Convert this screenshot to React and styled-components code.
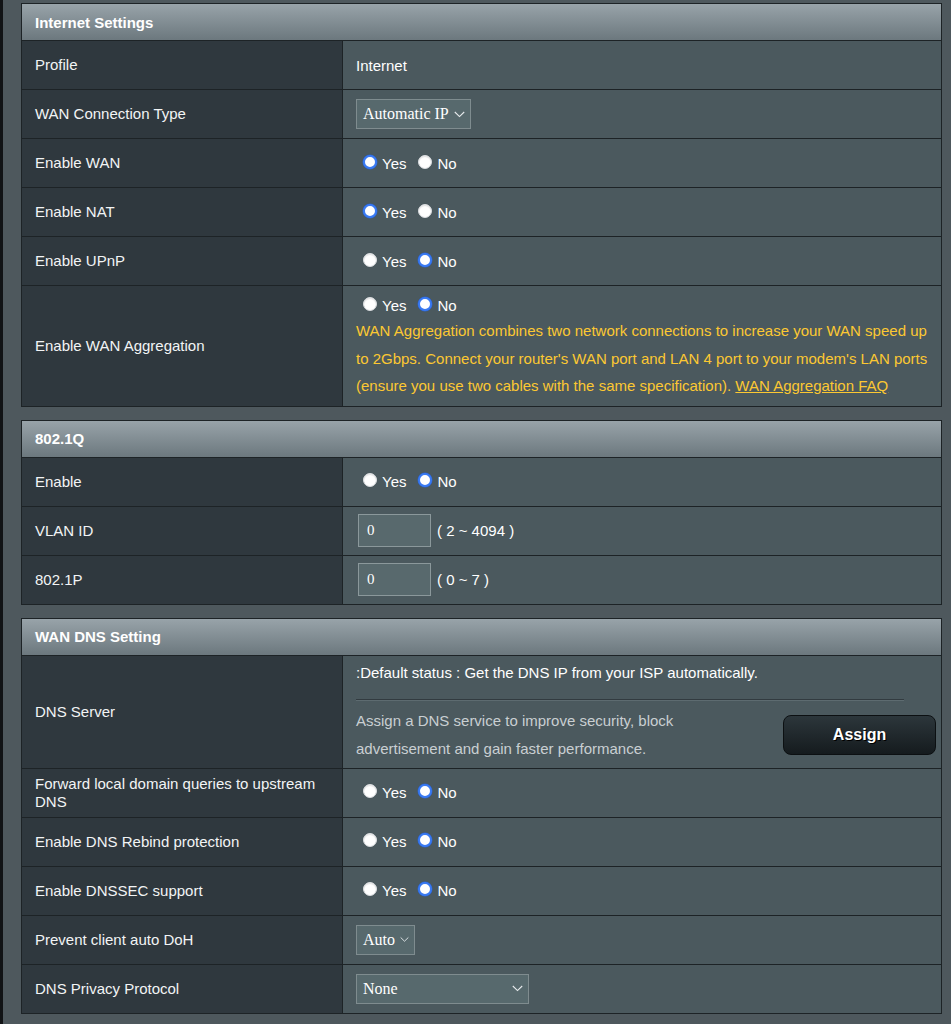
import React from "react";
import styled, { createGlobalStyle } from "styled-components";

const Global = createGlobalStyle`
  html, body { margin: 0; padding: 0; }
  body {
    background: #4e585d;
    font-family: "Liberation Sans", Arial, sans-serif;
    color: #ffffff;
  }
`;

const Page = styled.div`
  border-left: 3px solid #111315;
  padding: 3px 9px 12px 18px;
  min-height: 1024px;
  box-sizing: border-box;
  display: flex;
  flex-direction: column;
  gap: 13px;
`;

const Section = styled.section`
  border: 1px solid #1d2326;
  background: #4b595e;
`;

const Header = styled.div`
  height: 36px;
  display: flex;
  align-items: center;
  padding: 0 13px;
  background: linear-gradient(to bottom, #98a3a9 0%, #6c787e 100%);
  font-size: 15px;
  font-weight: bold;
  color: #ffffff;
`;

const Row = styled.div`
  display: grid;
  grid-template-columns: 321px 1fr;
  border-top: 1px solid #1d2326;
  min-height: 48px;
`;

const Label = styled.div`
  background: #2f383e;
  border-right: 1px solid #1d2326;
  display: flex;
  align-items: center;
  padding: 0 13px;
  font-size: 15px;
  line-height: 18px;
  color: #f2f4f5;
`;

const Value = styled.div`
  display: flex;
  flex-direction: ${(p) => (p.$column ? "column" : "row")};
  align-items: ${(p) => (p.$column ? "stretch" : "center")};
  padding: ${(p) => p.$pad || "0 13px"};
  font-size: 15px;
  color: #ffffff;
`;

const RadioGroup = styled.div`
  display: flex;
  align-items: center;
  height: 22px;
`;

const RadioOpt = styled.label`
  display: flex;
  align-items: center;
  margin-left: ${(p) => (p.$first ? 7 : 12)}px;
  font-size: 15px;
  color: #ffffff;
`;

const Dot = styled.span`
  width: 14px;
  height: 14px;
  border-radius: 50%;
  box-sizing: border-box;
  margin-right: 5px;
  margin-top: -3px;
  background: #ffffff;
  border: ${(p) => (p.$on ? "2.5px solid #3a7af2" : "1px solid #d9dcdf")};
  box-shadow: ${(p) => (p.$on ? "0 0 0 0.5px #2a60c9" : "inset 0 1px 1px rgba(0,0,0,0.12)")};
`;

const Select = styled.div`
  display: inline-flex;
  align-items: center;
  justify-content: space-between;
  height: 30px;
  width: ${(p) => p.$w}px;
  box-sizing: border-box;
  padding: 0 5px 0 6px;
  background: #57696d;
  border: 1px solid #7f8c8f;
  font-family: "Liberation Serif", "Times New Roman", serif;
  font-size: 16px;
  color: #ffffff;
`;

const Chevron = () => (
  <svg width="11" height="7" viewBox="0 0 11 7" style={{ marginLeft: 5 }}>
    <path d="M0.8 1 L5.5 5.6 L10.2 1" fill="none" stroke="#e8ecee" strokeWidth="1.1" />
  </svg>
);

const InputBox = styled.div`
  width: 73px;
  height: 33px;
  box-sizing: border-box;
  margin-left: 2px;
  padding-left: 8px;
  display: flex;
  align-items: center;
  background: #58696d;
  border: 1px solid #8b989b;
  font-family: "Liberation Serif", "Times New Roman", serif;
  font-size: 15px;
  color: #ffffff;
`;

const Range = styled.span`
  margin-left: 6px;
  font-size: 15px;
  color: #ffffff;
`;

const Hint = styled.div`
  margin-top: 1px;
  color: #fcc832;
  font-size: 15px;
  line-height: 27.5px;
`;

const HintLink = styled.span`
  color: #fcc832;
  text-decoration: underline;
`;

const Status = styled.div`
  line-height: 18px;
  font-size: 15px;
  color: #ffffff;
`;

const Rule = styled.div`
  margin: 17px 32px 6px 0;
  border-top: 1px solid #323b40;
  border-bottom: 1px solid #5d6b70;
`;

const AssignRow = styled.div`
  display: flex;
  align-items: center;
  justify-content: space-between;
`;

const Muted = styled.div`
  width: 350px;
  color: #c9cfd2;
  font-size: 15px;
  line-height: 28px;
`;

const AssignButton = styled.button`
  width: 153px;
  height: 40px;
  border-radius: 8px;
  border: 1px solid #0c1012;
  background: linear-gradient(to bottom, #2c363b 0%, #151b1e 100%);
  color: #ffffff;
  font-family: "Liberation Sans", Arial, sans-serif;
  font-size: 16px;
  font-weight: bold;
  text-shadow: 1px 1px 0 #000;
  cursor: pointer;
`;

const YesNo = ({ yes }) => (
  <RadioGroup>
    <RadioOpt $first>
      <Dot $on={yes} />
      Yes
    </RadioOpt>
    <RadioOpt>
      <Dot $on={!yes} />
      No
    </RadioOpt>
  </RadioGroup>
);

export default function App() {
  return (
    <>
      <Global />
      <Page>
        <Section>
          <Header>Internet Settings</Header>
          <Row>
            <Label>Profile</Label>
            <Value>Internet</Value>
          </Row>
          <Row>
            <Label>WAN Connection Type</Label>
            <Value>
              <Select $w={115}>
                Automatic IP
                <Chevron />
              </Select>
            </Value>
          </Row>
          <Row>
            <Label>Enable WAN</Label>
            <Value><YesNo yes /></Value>
          </Row>
          <Row>
            <Label>Enable NAT</Label>
            <Value><YesNo yes /></Value>
          </Row>
          <Row>
            <Label>Enable UPnP</Label>
            <Value><YesNo yes={false} /></Value>
          </Row>
          <Row>
            <Label>Enable WAN Aggregation</Label>
            <Value $column $pad="8px 7px 6px 13px">
              <YesNo yes={false} />
              <Hint>
                WAN Aggregation combines two network connections to increase your WAN speed up
                to 2Gbps. Connect your router's WAN port and LAN 4 port to your modem's LAN ports
                (ensure you use two cables with the same specification).{" "}
                <HintLink>WAN Aggregation FAQ</HintLink>
              </Hint>
            </Value>
          </Row>
        </Section>

        <Section>
          <Header>802.1Q</Header>
          <Row>
            <Label>Enable</Label>
            <Value><YesNo yes={false} /></Value>
          </Row>
          <Row>
            <Label>VLAN ID</Label>
            <Value>
              <InputBox>0</InputBox>
              <Range>( 2 ~ 4094 )</Range>
            </Value>
          </Row>
          <Row>
            <Label>802.1P</Label>
            <Value>
              <InputBox>0</InputBox>
              <Range>( 0 ~ 7 )</Range>
            </Value>
          </Row>
        </Section>

        <Section>
          <Header>WAN DNS Setting</Header>
          <Row>
            <Label>DNS Server</Label>
            <Value $column $pad="8px 5px 5px 13px">
              <Status>:Default status : Get the DNS IP from your ISP automatically.</Status>
              <Rule />
              <AssignRow>
                <Muted>
                  Assign a DNS service to improve security, block advertisement and gain faster
                  performance.
                </Muted>
                <AssignButton>Assign</AssignButton>
              </AssignRow>
            </Value>
          </Row>
          <Row>
            <Label>Forward local domain queries to upstream DNS</Label>
            <Value><YesNo yes={false} /></Value>
          </Row>
          <Row>
            <Label>Enable DNS Rebind protection</Label>
            <Value><YesNo yes={false} /></Value>
          </Row>
          <Row>
            <Label>Enable DNSSEC support</Label>
            <Value><YesNo yes={false} /></Value>
          </Row>
          <Row>
            <Label>Prevent client auto DoH</Label>
            <Value>
              <Select $w={59}>
                Auto
                <Chevron />
              </Select>
            </Value>
          </Row>
          <Row>
            <Label>DNS Privacy Protocol</Label>
            <Value>
              <Select $w={173}>
                None
                <Chevron />
              </Select>
            </Value>
          </Row>
        </Section>
      </Page>
    </>
  );
}
